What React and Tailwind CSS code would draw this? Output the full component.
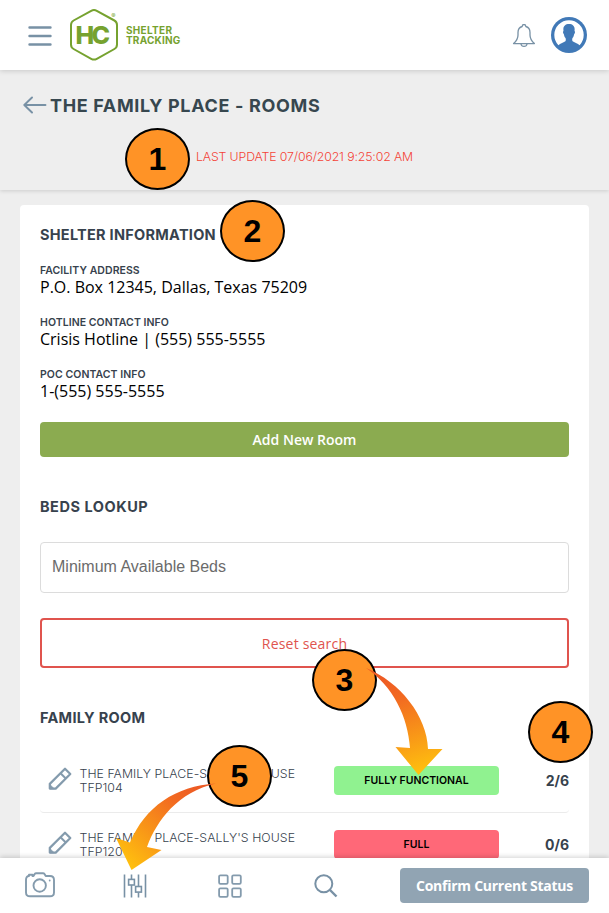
import React from "react";

const OPEN = "font-['Open_Sans','Noto_Sans',sans-serif]";
const HEADING = "text-[14.5px] leading-[20px] font-bold text-[#37424d]";

function Logo() {
  return (
    <div className="flex items-center ml-[18px]">
      <svg width="50" height="54" viewBox="0 0 50 54" className="shrink-0">
        <path
          d="M21.2 2.8Q24 1.2 26.8 2.8L44.4 12.5Q47 14 47 17V36.5Q47 39.5 44.4 41L26.8 50.8Q24 52.3 21.2 50.8L3.6 41Q1 39.5 1 36.5V17Q1 14 3.6 12.5Z"
          fill="none"
          stroke="#76a22f"
          strokeWidth="2"
        />
        <text x="5.5" y="36" textLength="34.5" lengthAdjust="spacing" className="font-['Inter',sans-serif] text-[25px] font-extrabold" fill="#76a22f">HC</text>
        <text x="41.200" y="9.500" className="font-['Inter',sans-serif] text-[6.5px] font-semibold" fill="#8bb04f">®</text>
      </svg>
      <div className="mb-px ml-[6px] font-['Inter',sans-serif] text-[10px] leading-[10px] font-bold text-[#76a22f]">
        <div className="tracking-[0.3px]">SHELTER</div>
        <div className="tracking-[0.2px]">TRACKING</div>
      </div>
    </div>
  );
}

function Header() {
  return (
    <header className="relative z-10 flex h-[70px] items-center bg-white pl-7 pr-[22px] shadow-[0_1px_5px_rgba(0,0,0,0.16)]">
      <svg width="24" height="22" viewBox="0 0 24 22" className="mt-px">
        <path d="M1.500 2.500H22.500M1.500 11H22.500M1.500 19.500H22.500" stroke="#7891a5" strokeWidth="2.400" strokeLinecap="round" />
      </svg>
      <Logo />
      <div className="flex-1" />
      <svg width="24" height="24" viewBox="0 0 24 24" fill="none" stroke="#7891a5" strokeWidth="1.300" className="mr-[15px] mt-[2px]">
        <path d="M10.300 2.700V2.200A1.700 1.700 0 0 1 13.700 2.200V2.700M10.300 2.500C7.300 3.200 6 5.300 6 8.500V11C6 14.800 4.500 17 1.600 19.600H22.400C19.500 17 18 14.800 18 11V8.500C18 5.300 16.700 3.200 13.700 2.500" strokeLinejoin="round" />
        <path d="M9 20C9.500 23.200 14.500 23.200 15 20" />
      </svg>
      <svg width="36" height="36" viewBox="0 0 36 36">
        <circle cx="18" cy="18" r="18" fill="#4179b7" />
        <path d="M7.400 28.200A14.700 14.700 0 1 1 28.600 28.200C27 26.300 22.800 25.300 21.600 24.200C21 23.600 21.100 22 21.500 21C22.500 20 22.900 18.500 23.200 17C24.200 16.300 24.200 14.600 23.500 13.800C24.200 9.500 22 7 18 7S11.800 9.500 12.500 13.800C11.800 14.600 11.800 16.300 12.800 17C13.100 18.500 13.500 20 14.500 21C14.900 22 15 23.600 14.400 24.200C13.200 25.300 9 26.300 7.400 28.200Z" fill="#fff" />
      </svg>
    </header>
  );
}

function TitleBand() {
  return (
    <section className="h-[120px] bg-[#eee] shadow-[0_1px_4px_rgba(0,0,0,0.14)]">
      <div className="flex h-[71px] items-center pl-[23px]">
        <svg width="24" height="18" viewBox="0 0 24 18" fill="none" stroke="#7891a5" strokeWidth="1.900" strokeLinecap="round" strokeLinejoin="round" className="-mt-px">
          <path d="M22.500 9H1.500M9 1.500L1.300 9L9 16.500" />
        </svg>
        <h1 className="ml-[3px] whitespace-nowrap text-[18px] font-bold tracking-[0.65px] text-[#37474f]">THE FAMILY PLACE - ROOMS</h1>
      </div>
      <div className="whitespace-nowrap pl-[196px] text-[12.300px] leading-[32px] font-light tracking-[-0.13px] text-[#f44336]">LAST UPDATE 07/06/2021 9:25:02 AM</div>
    </section>
  );
}

function Field({ label, value }) {
  return (
    <div className="h-[52px]">
      <div className="h-[14px] text-[10.500px] leading-[16px] font-semibold tracking-[0.06px] text-[#37424d]">{label}</div>
      <div className={OPEN + " text-[16px] leading-[20px] text-black"}>{value}</div>
    </div>
  );
}

function Pencil() {
  return (
    <svg width="24" height="24" viewBox="0 0 24 24" fill="none" stroke="#849bad" strokeWidth="2.200" strokeLinejoin="round" className="-mt-[3px]">
      <path d="M17 1.700L22.300 7L7.700 21.600H1.800V16.900Z" />
      <path d="M12.500 6.200L17.800 11.500" strokeWidth="2" />
      <path d="M2 17.500L6.500 22H2Z" fill="#849bad" strokeWidth="0.500" />
    </svg>
  );
}

function Room({ code, status, color, beds }) {
  return (
    <div className="flex h-16 items-center rounded-[4px] border-b border-[#ebebeb] pl-2">
      <Pencil />
      <div className="ml-[7.500px] w-[254.500px] whitespace-nowrap text-[12.300px] leading-[14px] font-light tracking-[0.06px] text-[#37424d]">
        <div>THE FAMILY PLACE-SALLY'S HOUSE</div>
        <div>{code}</div>
      </div>
      <div className={"flex h-[29px] w-[165px] items-center justify-center rounded-[4px] text-[10.500px] font-semibold text-black " + color}>{status}</div>
      <div className="flex-1 text-right text-[14px] font-bold text-[#37424d]">{beds}</div>
    </div>
  );
}

function BottomBar() {
  return (
    <nav className="absolute inset-x-0 bottom-0 flex h-[55px] items-center bg-white shadow-[0_-1px_5px_rgba(0,0,0,0.18)]">
      <svg width="32" height="26" viewBox="0 0 32 26" fill="none" stroke="#849bad" strokeWidth="1.900" className="-mt-px ml-6">
        <path d="M9.500 4L10.700 2Q11.200 1.200 12.200 1.200H19Q20 1.200 20.500 2L21.700 4H26Q30 4 30 8V20.500Q30 24.300 26 24.300H6Q2 24.300 2 20.500V8Q2 4 5 4V2.800H8.500V4Z" strokeLinejoin="round" />
        <circle cx="15.700" cy="13.500" r="6.200" />
        <circle cx="25.700" cy="8.500" r="0.900" fill="#849bad" stroke="none" />
      </svg>
      <svg width="24" height="24" viewBox="0 0 24 24" fill="none" stroke="#7891a5" strokeWidth="1.600" className="ml-[67px]">
        <path d="M1.500 0.500V23.500M22.500 0.500V23.500M8.500 0.500V5M8.500 11V23.500M15.500 0.500V12.500M15.500 18.500V23.500" />
        <rect x="5.600" y="5.400" width="5.800" height="5.600" />
        <rect x="12.600" y="12.500" width="5.800" height="5.600" />
      </svg>
      <svg width="24" height="24" viewBox="0 0 24 24" fill="none" stroke="#849bad" strokeWidth="1.800" className="ml-[71px]">
        <rect x="1.100" y="1.300" width="8.600" height="8.600" rx="1.300" />
        <rect x="14.200" y="1.300" width="8.600" height="8.600" rx="1.300" />
        <rect x="1.100" y="14.300" width="8.600" height="8.600" rx="1.300" />
        <rect x="14.200" y="14.300" width="8.600" height="8.600" rx="1.300" />
      </svg>
      <svg width="24" height="24" viewBox="0 0 24 24" fill="none" stroke="#7891a5" strokeWidth="2" className="ml-[72px]">
        <circle cx="9.800" cy="9.800" r="8.500" />
        <path d="M16 16L22.500 22.500" strokeWidth="2.400" />
      </svg>
      <button className={OPEN + " ml-[62px] h-[35px] w-[189px] whitespace-nowrap rounded-[4px] bg-[#91a4b3] text-[14px] font-bold tracking-[-0.26px] text-white"}>Confirm Current Status</button>
    </nav>
  );
}

function Marker({ n, place }) {
  return (
    <div className={"absolute flex h-[62px] w-[65px] items-center justify-center rounded-[50%] border-2 border-black bg-[#ff9326] font-['Liberation_Sans',sans-serif] text-[32px] leading-none font-bold text-black " + place}>{n}</div>
  );
}

function Arrows() {
  return (
    <svg className="absolute left-0 top-0" width="609" height="913" viewBox="0 0 609 913">
      <defs>
        <linearGradient id="arrowA" gradientUnits="userSpaceOnUse" x1="385" y1="675" x2="418" y2="775">
          <stop offset="0" stopColor="#ed5a24" />
          <stop offset="0.250" stopColor="#f26a21" />
          <stop offset="1" stopColor="#ffc20e" />
        </linearGradient>
        <linearGradient id="arrowB" gradientUnits="userSpaceOnUse" x1="197" y1="785" x2="125" y2="865">
          <stop offset="0" stopColor="#ed5a24" />
          <stop offset="0.250" stopColor="#f26a21" />
          <stop offset="1" stopColor="#ffc20e" />
        </linearGradient>
      </defs>
      <path d="M366 668C400 682 427 716 428 749L442.500 749L418.500 775L395.500 747L410 748C408 717 393 686 366 668Z" fill="url(#arrowA)" />
      <path d="M216 783.500C175 786 145 807 130 842.500L116 838L131.500 870L161.500 850L147 847C157 820 178 792 216 783.500Z" fill="url(#arrowB)" />
    </svg>
  );
}

export default function App() {
  return (
    <div className="relative h-[913px] w-[609px] overflow-hidden bg-[#eee] font-['Inter',sans-serif]">
      <Header />
      <TitleBand />
      <main className="mx-5 mt-[15px] h-[720px] rounded-[4px] bg-white px-5 pt-[20px]">
        <h2 className={HEADING + " h-[38px] tracking-[0.27px]"}>SHELTER INFORMATION</h2>
        <Field label="FACILITY ADDRESS" value="P.O. Box 12345, Dallas, Texas 75209" />
        <Field label="HOTLINE CONTACT INFO" value="Crisis Hotline | (555) 555-5555" />
        <Field label="POC CONTACT INFO" value="1-(555) 555-5555" />
        <button className={OPEN + " mt-[3px] block h-[35px] w-full rounded-[4px] bg-[#8bab50] text-[14px] font-semibold text-white"}>Add New Room</button>
        <h2 className={HEADING + " mt-[40px] tracking-[0.53px]"}>BEDS LOOKUP</h2>
        <div className="mt-[25px] flex h-[51px] items-center rounded-[4px] border border-[#dcdcdc] pl-[11px] pb-[1px] font-['Liberation_Sans',sans-serif] text-[16px] text-[#6b6b6b]">Minimum Available Beds</div>
        <button className={OPEN + " mt-[25px] block h-[50px] w-full rounded-[4px] border-2 border-[#e0544e] bg-white text-[14px] font-medium tracking-[0.2px] text-[#e0544e]"}>Reset search</button>
        <h2 className={HEADING + " mt-[40px] mb-[21px] tracking-[0.3px]"}>FAMILY ROOM</h2>
        <Room code="TFP104" status="FULLY FUNCTIONAL" color="bg-[#90f290]" beds="2/6" />
        <Room code="TFP120" status="FULL" color="bg-[#ff6878]" beds="0/6" />
      </main>
      <BottomBar />
      <Marker n="1" place="left-[125px] top-[128px]" />
      <Marker n="2" place="left-[220px] top-[200px]" />
      <Marker n="3" place="left-[312px] top-[649px]" />
      <Marker n="4" place="left-[528px] top-[701px]" />
      <Marker n="5" place="left-[207px] top-[745px]" />
      <Arrows />
    </div>
  );
}
